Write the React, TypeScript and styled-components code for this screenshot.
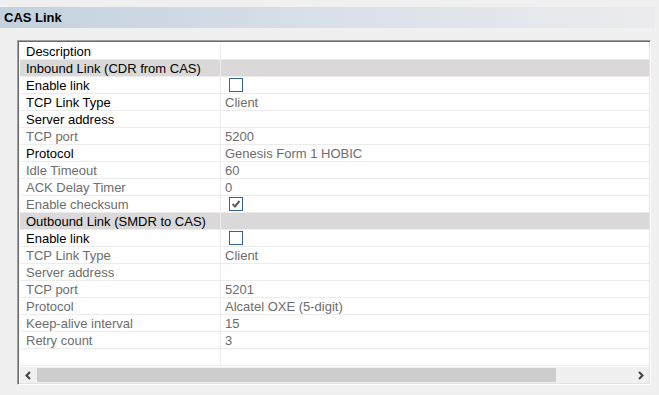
import * as React from "react";
import styled, { createGlobalStyle } from "styled-components";

// 1行分の定義。header で見出し行か通常行かを切り替える
interface Row {
  label: string;
  value?: string;
  check?: boolean;
  active?: boolean;
  header?: boolean;
}

const rows: Row[] = [
  { label: "Description", active: true },
  { label: "Inbound Link (CDR from CAS)", header: true },
  { label: "Enable link", check: false, active: true },
  { label: "TCP Link Type", value: "Client", active: true },
  { label: "Server address", active: true },
  { label: "TCP port", value: "5200" },
  { label: "Protocol", value: "Genesis Form 1 HOBIC", active: true },
  { label: "Idle Timeout", value: "60" },
  { label: "ACK Delay Timer", value: "0" },
  { label: "Enable checksum", check: true },
  { label: "Outbound Link (SMDR to CAS)", header: true },
  { label: "Enable link", check: false, active: true },
  { label: "TCP Link Type", value: "Client" },
  { label: "Server address" },
  { label: "TCP port", value: "5201" },
  { label: "Protocol", value: "Alcatel OXE (5-digit)" },
  { label: "Keep-alive interval", value: "15" },
  { label: "Retry count", value: "3" },
  { label: "" },
];

const GlobalStyle = createGlobalStyle`
  body {
    margin: 0;
    background: #f0f0f0;
    font-family: "Liberation Sans", Arial, sans-serif;
  }
`;

const Checkbox: React.FC<{ checked: boolean }> = ({ checked }) => (
  <Box>
    {checked && (
      <svg width="12" height="12" viewBox="0 0 12 12">
        <path d="M2.5 6 L5 8.5 L9.5 3" fill="none" stroke="#5c5c5c" strokeWidth="2" />
      </svg>
    )}
  </Box>
);

export default function App() {
  return (
    <>
      <GlobalStyle />
      <Page>
        <TitleBar>CAS Link</TitleBar>
        <Frame>
          <Grid>
            {rows.map((row, i) => (
              <React.Fragment key={i}>
                <Label $header={row.header} $active={row.active || row.header}>
                  {row.label}
                </Label>
                <Value $header={row.header}>
                  {row.check !== undefined ? (
                    <Checkbox checked={row.check} />
                  ) : (
                    row.value
                  )}
                </Value>
              </React.Fragment>
            ))}
          </Grid>
          <Filler />
          <ScrollBar>
            <Arrow>
              <svg width="9" height="9" viewBox="0 0 9 9">
                <path d="M6 1 L2.5 4.5 L6 8" fill="none" stroke="#404040" strokeWidth="2" />
              </svg>
            </Arrow>
            <Thumb />
            <Track />
            <Arrow>
              <svg width="9" height="9" viewBox="0 0 9 9">
                <path d="M3 1 L6.5 4.5 L3 8" fill="none" stroke="#404040" strokeWidth="2" />
              </svg>
            </Arrow>
          </ScrollBar>
        </Frame>
      </Page>
    </>
  );
}

const Page = styled.div`
  padding-top: 7px;
  width: 659px;
  height: 395px;
  box-sizing: border-box;
`;

const TitleBar = styled.div`
  width: 655px;
  height: 21px;
  line-height: 21px;
  padding-left: 4px;
  box-sizing: border-box;
  background: linear-gradient(to right, #c3d1de, #dde3ea 60%, #ebebed);
  font-weight: bold;
  font-size: 13px;
  color: #000;
`;

const Frame = styled.div`
  margin: 12px 0 0 17px;
  width: 634px;
  height: 345px;
  box-sizing: border-box;
  border: 1px solid;
  border-color: #a0a0a0 #ffffff #ffffff #a0a0a0;
  box-shadow: inset 1px 1px 0 #696969, inset -1px -1px 0 #e3e3e3;
  padding: 2px 1px 1px 2px;
  display: flex;
  flex-direction: column;
  background: #fff;
`;

const Grid = styled.div`
  display: grid;
  grid-template-columns: 201px 1fr;
  grid-auto-rows: 17px;
`;

const Label = styled.div<{ $header?: boolean; $active?: boolean }>`
  padding: 2px 0 0 6px;
  font-size: 13px;
  line-height: 14px;
  color: ${(p) => (p.$active ? "#000" : "#6d6d6d")};
  background: ${(p) => (p.$header ? "#dad8d8" : "#fff")};
  border-bottom: 1px solid #ececec;
  border-right: 1px solid #ececec;
  white-space: nowrap;
`;

const Value = styled.div<{ $header?: boolean }>`
  padding: 2px 0 0 4px;
  font-size: 13px;
  line-height: 14px;
  color: #6d6d6d;
  background: ${(p) => (p.$header ? "#dad8d8" : "#fff")};
  border-bottom: 1px solid #ececec;
  display: flex;
  align-items: flex-start;
  white-space: nowrap;
`;

const Box = styled.span`
  width: 14px;
  height: 14px;
  margin: -1px 0 0 4px;
  box-sizing: border-box;
  border: 1px solid #33639a;
  background: #fff;
  display: flex;
  align-items: center;
  justify-content: center;
`;

const Filler = styled.div`
  flex: 1;
`;

const ScrollBar = styled.div`
  height: 16px;
  display: flex;
  background: #f0f0f0;
`;

const Arrow = styled.div`
  width: 17px;
  display: flex;
  align-items: center;
  justify-content: center;
`;

const Thumb = styled.div`
  width: 519px;
  margin: 1px 0;
  background: #cdcdcd;
`;

const Track = styled.div`
  flex: 1;
`;
